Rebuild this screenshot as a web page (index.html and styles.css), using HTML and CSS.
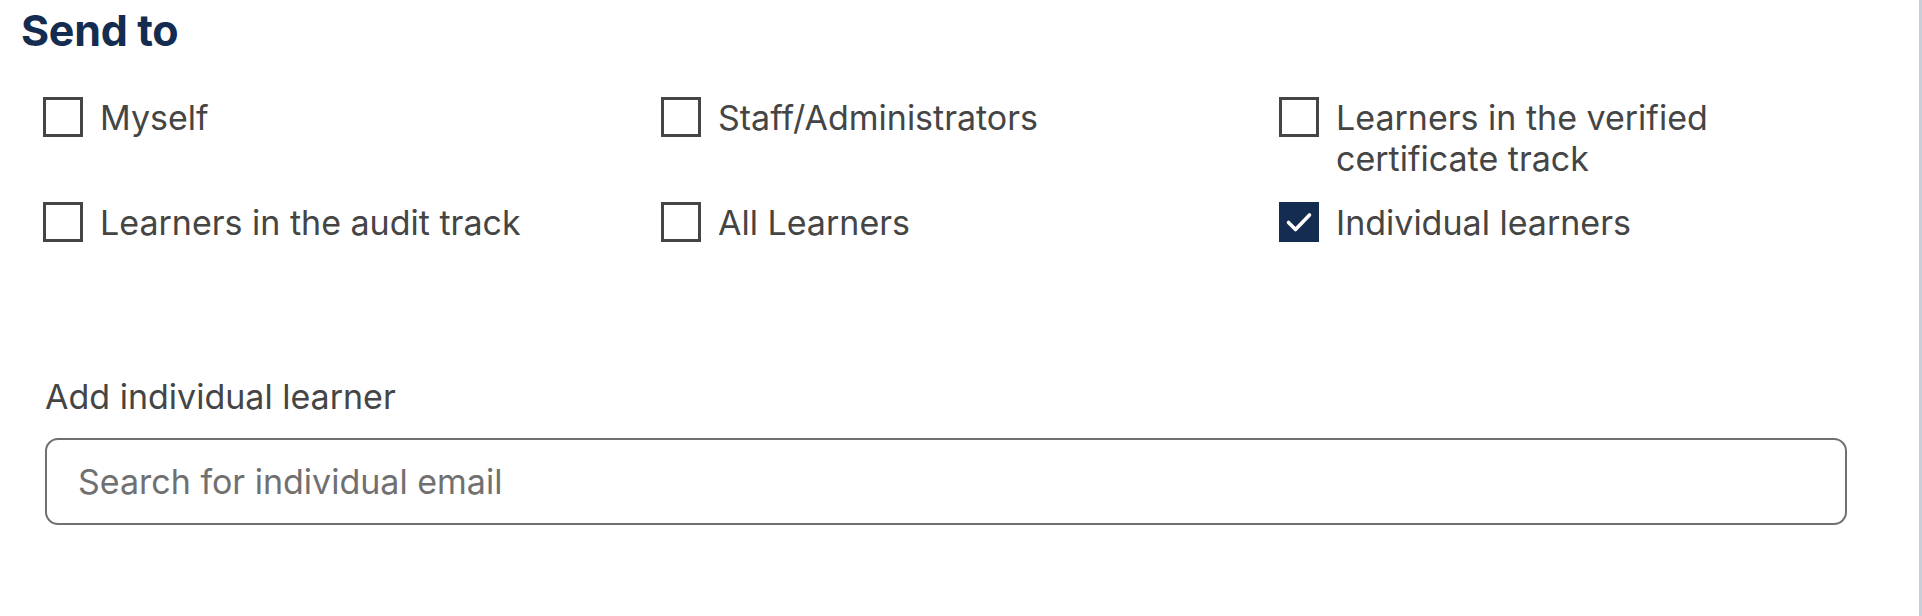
FILE: index.html
```html
<!DOCTYPE html>
<html lang="en">
<head>
<meta charset="utf-8">
<title>Send to</title>
<link rel="stylesheet" href="styles.css">
</head>
<body>
<div class="page">
  <h2 class="title">Send to</h2>
  <div class="options">
    <label class="option"><span class="box"></span><span class="text">Myself</span></label>
    <label class="option"><span class="box"></span><span class="text">Staff/Administrators</span></label>
    <label class="option"><span class="box"></span><span class="text">Learners in the verified<br>certificate track</span></label>
    <label class="option"><span class="box"></span><span class="text">Learners in the audit track</span></label>
    <label class="option"><span class="box"></span><span class="text">All Learners</span></label>
    <label class="option"><span class="box checked"><svg viewBox="0 0 40 40" width="40" height="40"><path d="M9.5 20.5 L16.5 27.5 L30.5 13" fill="none" stroke="#fff" stroke-width="3.6" stroke-linecap="round" stroke-linejoin="round"/></svg></span><span class="text">Individual learners</span></label>
  </div>
  <div class="field">
    <div class="field-label">Add individual learner</div>
    <div class="input"><span class="placeholder">Search for individual email</span></div>
  </div>
</div>
<div class="edge"></div>
</body>
</html>
```
FILE: styles.css
```css
html, body {
  margin: 0;
  padding: 0;
  background: #fff;
  height: 100%;
}
body {
  font-family: Inter, "Noto Sans", sans-serif;
  color: #454545;
  position: relative;
  overflow: hidden;
}
.page {
  padding: 0 75px 0 21px;
}
.title {
  margin: 0;
  padding-top: 4px;
  font-size: 43px;
  line-height: 52px;
  font-weight: 700;
  color: #142c50;
  letter-spacing: -0.3px;
}
.options {
  display: grid;
  grid-template-columns: 618px 618px 618px;
  row-gap: 23px;
  margin-top: 41px;
  padding-left: 22px;
}
.option {
  display: flex;
  align-items: flex-start;
  gap: 17px;
  font-size: 34px;
  line-height: 41px;
}
.box {
  flex: none;
  width: 40px;
  height: 40px;
  box-sizing: border-box;
  border: 3.5px solid #454545;
}
.box.checked {
  background: #142c50;
  border-color: #142c50;
  display: flex;
  align-items: center;
  justify-content: center;
}
.box.checked svg {
  display: block;
  flex: none;
}
.text {
  display: block;
}
.field {
  margin-top: 134px;
  padding-left: 24px;
}
.field-label {
  font-size: 34px;
  line-height: 40px;
}
.input {
  margin-top: 21px;
  height: 87px;
  box-sizing: border-box;
  border: 2px solid #707070;
  border-radius: 13px;
  display: flex;
  align-items: center;
  padding-left: 31px;
}
.placeholder {
  font-size: 34px;
  color: #707070;
}
.edge {
  position: absolute;
  top: 0;
  right: 0;
  width: 3px;
  height: 100%;
  background: #c9cfd9;
}
```
